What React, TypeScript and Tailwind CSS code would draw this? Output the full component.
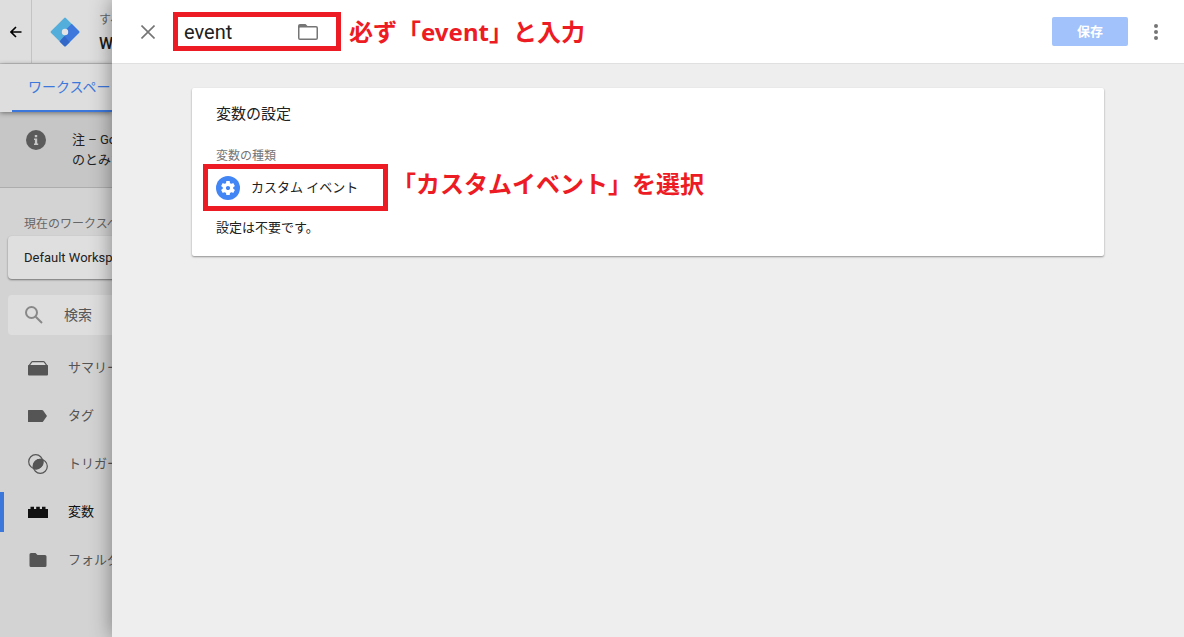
import type { ReactNode } from "react";

type NavItem = { label: string; icon: ReactNode; active?: boolean };

const navItems: NavItem[] = [
  {
    label: "サマリー",
    icon: (
      <svg width="20" height="20" viewBox="0 0 20 20" fill="currentColor" aria-hidden="true">
        <path d="M1.2 7.500L3.800 3.900Q4 3.600 4.500 3.600H15.500Q16 3.600 16.200 3.900L18.800 7.500" fill="#dadada" stroke="currentColor" strokeWidth="1.200" />
        <path d="M0 7.500Q0 7 .5 7H19.500Q20 7 20 7.500V16.500Q20 17.500 19 17.500H1Q0 17.500 0 16.500Z" />
      </svg>
    ),
  },
  {
    label: "タグ",
    icon: (
      <svg width="20" height="20" viewBox="0 0 20 20" fill="currentColor" aria-hidden="true">
        <path d="M0.500 4H14Q14.700 4 15.100 4.600L19 10L15.100 15.400Q14.700 16 14 16H0.500Q0 16 0 15.500V4.500Q0 4 0.500 4Z" />
      </svg>
    ),
  },
  {
    label: "トリガー",
    icon: (
      <svg width="20" height="20" viewBox="0 0 20 20" fill="none" stroke="currentColor" strokeWidth="1.200" aria-hidden="true">
        <circle cx="7.700" cy="7.700" r="7" />
        <circle cx="12.300" cy="12.300" r="7" />
        <path d="M14.600 5.700A7 7 0 0 0 5.700 14.600A7 7 0 0 0 14.600 5.700Z" fill="currentColor" />
      </svg>
    ),
  },
  {
    label: "変数",
    active: true,
    icon: (
      <svg width="20" height="20" viewBox="0 0 20 20" fill="currentColor" aria-hidden="true">
        <path d="M0 7H2.500V4.800H6V7H8.200V4.800H11.800V7H14V4.800H17.500V7H20V16H0Z" />
      </svg>
    ),
  },
  {
    label: "フォルダ",
    icon: (
      <svg width="20" height="20" viewBox="0 0 20 20" fill="currentColor" aria-hidden="true">
        <path d="M3 3H7.500L9.500 5H17Q18.500 5 18.500 6.500V15.500Q18.500 17 17 17H3Q1.500 17 1.500 15.500V4.500Q1.500 3 3 3Z" />
      </svg>
    ),
  },
];

function Logo() {
  return (
    <svg width="30" height="30" viewBox="0 0 30 30" aria-hidden="true">
      <path d="M14.200 0.900Q15 0.200 15.800 0.900L29.100 14.200Q29.800 15 29.100 15.800L15.800 29.100Q15 29.800 14.200 29.100L0.900 15.800Q0.200 15 0.900 14.200Z" fill="#54aedb" />
      <path d="M21.700 6.800L29.100 14.200Q29.800 15 29.100 15.800L15.800 29.100Q15 29.800 14.200 29.100L9.600 24.500L15 18.500V15L17 11.500Z" fill="#3e78dc" />
      <path d="M9.600 24.500L14.500 19L19.700 25.200L15.800 29.100Q15 29.800 14.200 29.100Z" fill="#3468c8" />
      <circle cx="15" cy="15" r="3.200" fill="#e4e4e4" />
    </svg>
  );
}

function Sidebar() {
  return (
    <aside className="w-28 shrink-0 overflow-hidden whitespace-nowrap bg-[#d3d3d3] text-[13px] text-[#555]">
      <header className="flex h-16 border-b border-[#c3c3c3] bg-[#dedede]">
        <button aria-label="戻る" className="flex w-8 shrink-0 items-center justify-center border-r border-[#c3c3c3] text-black">
          <svg width="12" height="12" viewBox="0 0 12 12" fill="none" stroke="currentColor" strokeWidth="1.600" aria-hidden="true">
            <path d="M11.500 6H1.500M6 1L1 6L6 11" />
          </svg>
        </button>
        <div className="flex shrink-0 items-center gap-[19px] pl-[18px]">
          <Logo />
          <div>
            <p className="pt-1 text-xs leading-4 text-[#666]">すべ</p>
            <p className="mt-1 text-base font-medium leading-6 text-[#1b1b1b]">W</p>
          </div>
        </div>
      </header>
      <nav className="relative bg-[#dedede] pl-3 shadow-[0_1px_5px_rgba(0,0,0,0.45)]">
        <a href="#workspace" className="block h-12 border-b-2 border-[#3c78dc] pl-4 text-sm leading-[46px] text-[#3c78dc]">
          ワークスペー
        </a>
      </nav>
      <div className="flex h-[76px] border-b border-[#adadad] bg-[#c6c6c6] pl-[26px] pt-[18px]">
        <svg width="20" height="20" viewBox="0 0 20 20" className="shrink-0" aria-hidden="true">
          <circle cx="10" cy="10" r="10" fill="#5b5b5b" />
          <path d="M8.800 5H11.200V7.200H8.800ZM8 8.500H11.200V13.600H12.200V15H8V13.600H8.900V9.900H8Z" fill="#c6c6c6" />
        </svg>
        <p className="ml-[26px] leading-5 text-[#222]">
          注 – Go
          <br />
          のとみな
        </p>
      </div>
      <p className="pl-6 pt-7 text-xs leading-4 text-[#666]">現在のワークスペ</p>
      <button className="ml-2 mt-1 block h-[43px] w-full rounded-sm bg-[#dfdfdf] pl-4 text-left text-[#222] shadow-[0_1px_2px_rgba(0,0,0,0.45)]">
        Default Worksp
      </button>
      <label className="ml-2 mt-4 flex h-10 w-full items-center rounded-sm bg-[#dedede] pl-4">
        <svg width="20" height="20" viewBox="0 0 20 20" fill="none" stroke="#888" strokeWidth="2" className="shrink-0" aria-hidden="true">
          <circle cx="7.500" cy="7.500" r="5.500" />
          <path d="M11.700 11.700L18 18" />
        </svg>
        <input
          type="search"
          aria-label="検索"
          placeholder="検索"
          className="ml-5 w-16 bg-transparent text-sm outline-none placeholder:text-[#555]"
        />
      </label>
      <nav className="mt-[13px] flex flex-col gap-2">
        {navItems.map((item) => (
          <a
            key={item.label}
            href="#"
            className={
              item.active
                ? "flex h-10 items-center gap-5 border-l-4 border-[#3c78dc] pl-6 text-[#111]"
                : "flex h-10 items-center gap-5 border-l-4 border-transparent pl-6"
            }
          >
            <span className="shrink-0">{item.icon}</span>
            {item.label}
          </a>
        ))}
      </nav>
    </aside>
  );
}

function Note({ children }: { children: ReactNode }) {
  return (
    <p className="whitespace-nowrap font-['Noto_Sans','Noto_Sans_CJK_JP',sans-serif] text-2xl font-bold leading-8 text-[#ed1c24]">
      {children}
    </p>
  );
}

export default function App() {
  return (
    <div className="flex min-h-screen font-['Roboto','Noto_Sans_CJK_JP',sans-serif]">
      <Sidebar />
      <main className="relative min-w-0 flex-1 bg-[#eee] shadow-[0_0_20px_rgba(0,0,0,0.42)]">
        <header className="flex h-16 items-center border-b border-[#e0e0e0] bg-white pl-[29px] pr-4">
          <button aria-label="閉じる" className="text-[#757575]">
            <svg width="14" height="14" viewBox="0 0 14 14" fill="none" stroke="currentColor" strokeWidth="1.600" aria-hidden="true">
              <path d="M0.500 0.500L13.500 13.500M13.500 0.500L0.500 13.500" />
            </svg>
          </button>
          <div className="ml-[18px] mr-2 flex h-[39px] w-[168px] shrink-0 items-center border-5 border-[#ed1c24] pl-1.5 pr-[18px]">
            <input
              aria-label="変数名"
              defaultValue="event"
              className="w-0 min-w-0 flex-1 bg-transparent text-xl leading-6 text-[#212121] outline-none"
            />
            <button aria-label="フォルダ" className="text-[#757575]">
              <svg width="20" height="16" viewBox="0 0 20 16" className="block" aria-hidden="true">
                <path
                  fill="currentColor"
                  fillRule="evenodd"
                  d="M2 0H7.500L9.500 2H18Q20 2 20 4V14Q20 16 18 16H2Q0 16 0 14V2Q0 0 2 0ZM1.500 4V14Q1.500 14.500 2 14.500H18Q18.500 14.500 18.500 14V4Q18.500 3.500 18 3.500H2Q1.500 3.500 1.500 4Z"
                />
              </svg>
            </button>
          </div>
          <Note>必ず「event」と入力</Note>
          <button className="ml-auto h-[29px] w-[76px] shrink-0 rounded-xs bg-[#a1c2fa] text-[13px] font-bold text-white">保存</button>
          <button aria-label="その他" className="ml-4 flex w-6 justify-center text-[#757575]">
            <svg width="4" height="16" viewBox="0 0 4 16" fill="currentColor" aria-hidden="true">
              <circle cx="2" cy="2" r="2" />
              <circle cx="2" cy="8" r="2" />
              <circle cx="2" cy="14" r="2" />
            </svg>
          </button>
        </header>
        <div className="px-20 pt-6">
          <section className="rounded-xs bg-white px-6 pb-[18px] pt-4 text-[13px] text-[#212121] shadow-[0_1px_2px_rgba(0,0,0,0.4)]">
            <h2 className="text-[15px] leading-5">変数の設定</h2>
            <p className="mt-6 text-xs leading-4 text-[#757575]">変数の種類</p>
            <div className="-ml-[13px] flex gap-1">
              <button className="flex h-[47px] w-[185px] shrink-0 items-center gap-[11px] border-5 border-[#ed1c24] pl-2">
                <svg width="24" height="24" viewBox="0 0 24 24" aria-hidden="true">
                  <circle cx="12" cy="12" r="12" fill="#4285f4" />
                  <g transform="translate(3.600 3.600) scale(0.700)">
                    <path
                      fill="#fff"
                      d="M19.430 12.980c.04-.32.07-.64.07-.98s-.03-.66-.07-.98l2.110-1.650c.19-.15.24-.42.12-.64l-2-3.460c-.12-.22-.39-.3-.61-.22l-2.490 1c-.52-.4-1.080-.73-1.690-.98l-.38-2.650C14.460 2.180 14.250 2 14 2h-4c-.25 0-.46.18-.49.42l-.38 2.650c-.61.25-1.170.59-1.690.98l-2.490-1c-.23-.09-.49 0-.61.22l-2 3.460c-.13.22-.07.49.12.64l2.110 1.650c-.04.32-.07.65-.07.98s.03.66.07.98l-2.110 1.650c-.19.15-.24.42-.12.64l2 3.460c.12.22.39.3.61.22l2.490-1c.52.4 1.080.73 1.690.98l.38 2.650c.03.24.24.42.49.42h4c.25 0 .46-.18.49-.42l.38-2.650c.61-.25 1.170-.59 1.690-.98l2.490 1c.23.09.49 0 .61-.22l2-3.460c.12-.22.07-.49-.12-.64l-2.110-1.650zM12 15c-1.660 0-3-1.340-3-3s1.340-3 3-3 3 1.340 3 3-1.340 3-3 3z"
                    />
                  </g>
                </svg>
                カスタム イベント
              </button>
              <div className="pt-1">
                <Note>「カスタムイベント」を選択</Note>
              </div>
            </div>
            <p className="mt-[7px] leading-5">設定は不要です。</p>
          </section>
        </div>
      </main>
    </div>
  );
}
